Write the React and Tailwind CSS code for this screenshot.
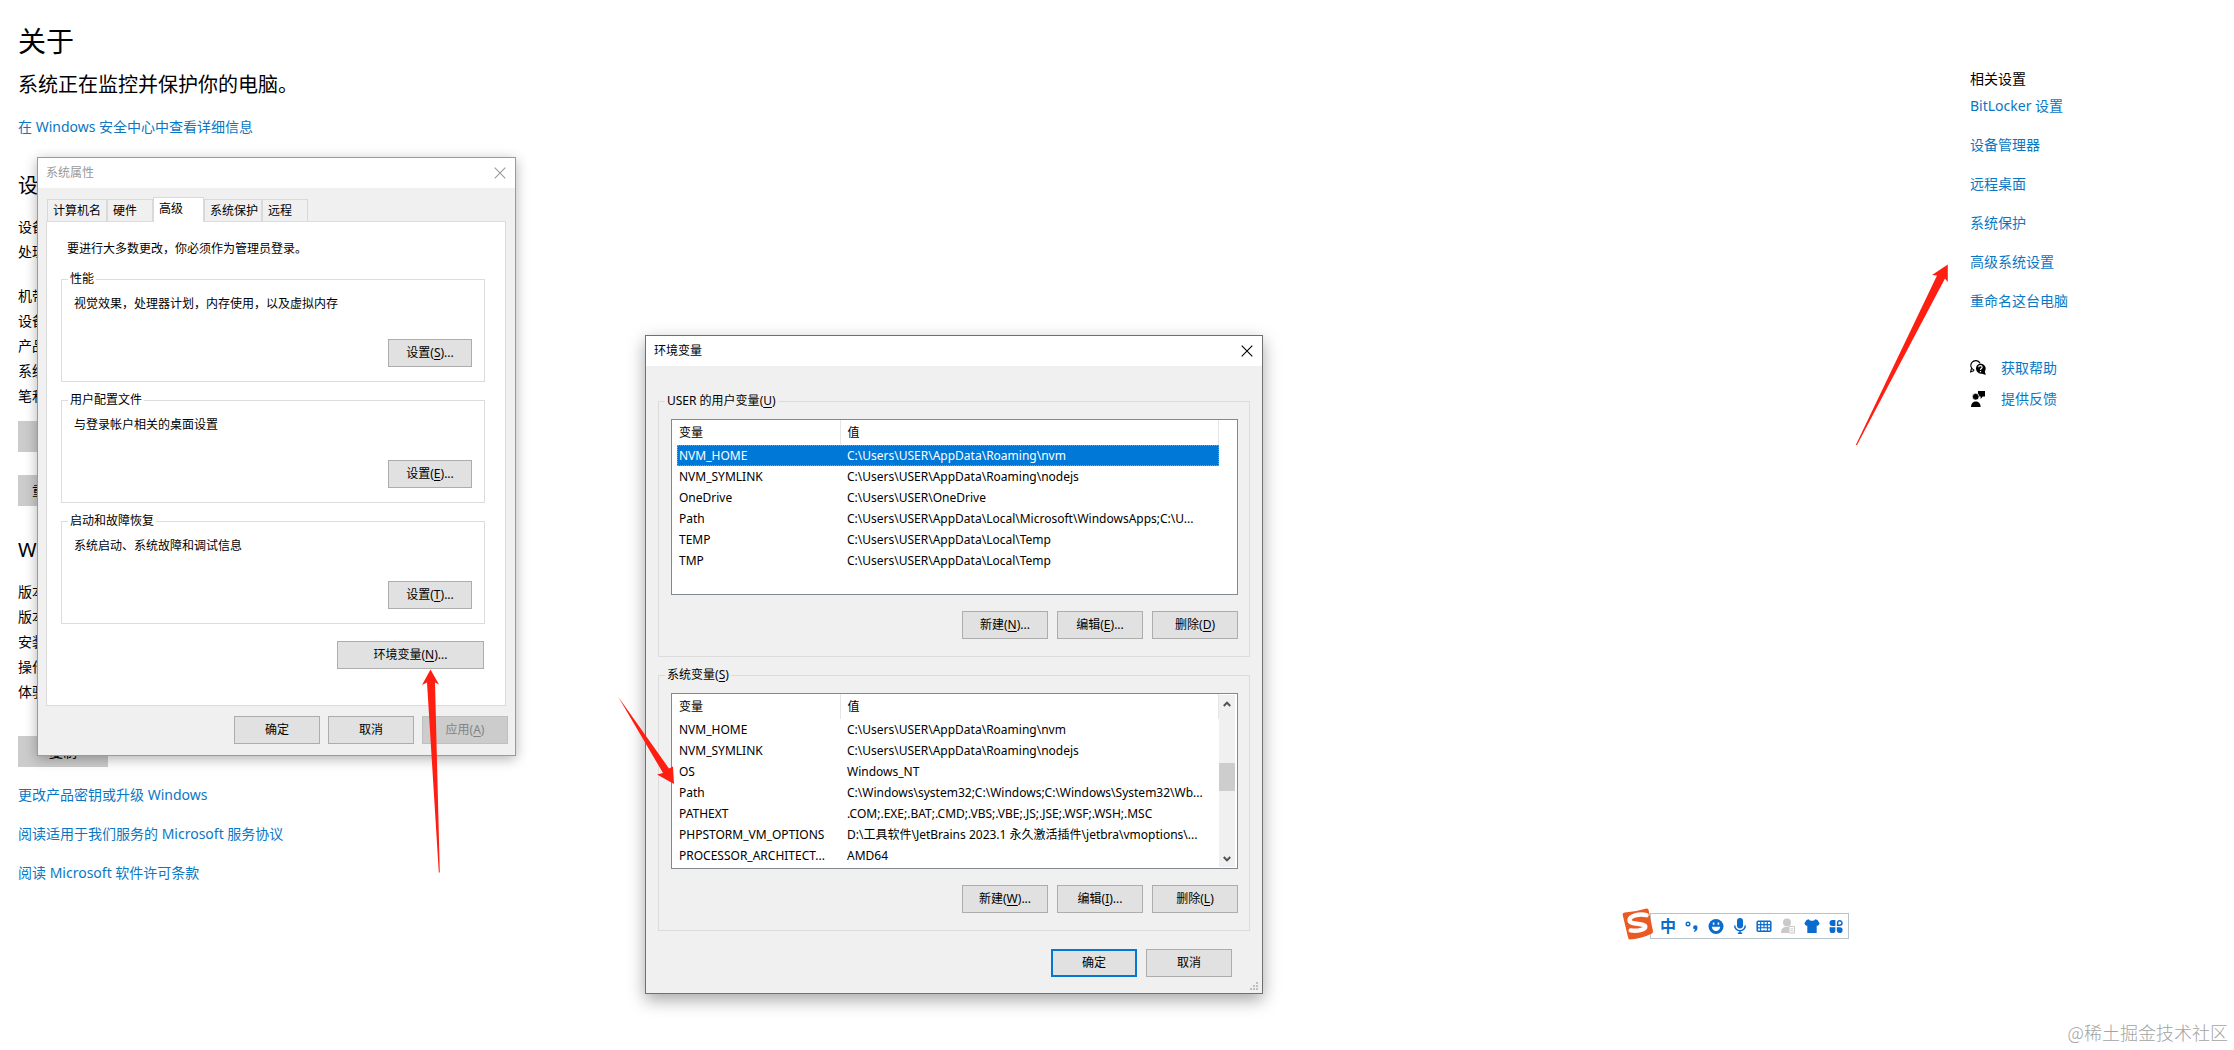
import clsx from 'clsx';

const userVars = [
  ['NVM_HOME', 'C:\\Users\\USER\\AppData\\Roaming\\nvm'],
  ['NVM_SYMLINK', 'C:\\Users\\USER\\AppData\\Roaming\\nodejs'],
  ['OneDrive', 'C:\\Users\\USER\\OneDrive'],
  ['Path', 'C:\\Users\\USER\\AppData\\Local\\Microsoft\\WindowsApps;C:\\U...'],
  ['TEMP', 'C:\\Users\\USER\\AppData\\Local\\Temp'],
  ['TMP', 'C:\\Users\\USER\\AppData\\Local\\Temp'],
];

const systemVars = [
  ['NVM_HOME', 'C:\\Users\\USER\\AppData\\Roaming\\nvm'],
  ['NVM_SYMLINK', 'C:\\Users\\USER\\AppData\\Roaming\\nodejs'],
  ['OS', 'Windows_NT'],
  ['Path', 'C:\\Windows\\system32;C:\\Windows;C:\\Windows\\System32\\Wb...'],
  ['PATHEXT', '.COM;.EXE;.BAT;.CMD;.VBS;.VBE;.JS;.JSE;.WSF;.WSH;.MSC'],
  ['PHPSTORM_VM_OPTIONS', 'D:\\工具软件\\JetBrains 2023.1 永久激活插件\\jetbra\\vmoptions\\...'],
  ['PROCESSOR_ARCHITECT...', 'AMD64'],
];

const groups = [
  { title: '性能', text: '视觉效果，处理器计划，内存使用，以及虚拟内存', hotkey: 'S' },
  { title: '用户配置文件', text: '与登录帐户相关的桌面设置', hotkey: 'E' },
  { title: '启动和故障恢复', text: '系统启动、系统故障和调试信息', hotkey: 'T' },
];

const tabs = [
  { name: '计算机名', width: 'w-[60px]' },
  { name: '硬件', width: 'w-[46px]' },
  { name: '高级', width: 'w-[51px]' },
  { name: '系统保护', width: 'w-[58px]' },
  { name: '远程', width: 'w-[46px]' },
];

const relatedLinks = ['BitLocker 设置', '设备管理器', '远程桌面', '系统保护', '高级系统设置', '重命名这台电脑'];

// Caption with its underlined access key, e.g. 设置(S)...
const Caption = ({ text, hotkey, dots }) => (
  <>
    {text}
    {hotkey && <>(<span className="underline underline-offset-2">{hotkey}</span>)</>}
    {dots && '...'}
  </>
);

const WinButton = ({ className, isDefault, ...caption }) => (
  <button
    type="button"
    className={clsx(
      'h-7 bg-[#e1e1e1] disabled:bg-[#cccccc] disabled:text-[#838383] disabled:border-[#bfbfbf]',
      isDefault ? 'border-2 border-[#0078d7]' : 'border border-[#adadad]',
      className || 'w-[86px]'
    )}
    disabled={caption.disabled}
  >
    <Caption {...caption} />
  </button>
);

const TitleBar = ({ id, title, className }) => (
  <header className={clsx('h-[30px] flex items-center justify-between bg-white pl-2 pr-[7px]', className)}>
    <h2 id={id}>{title}</h2>
    <button type="button" aria-label="关闭" className="w-4 h-4 flex items-center justify-center">
      <svg viewBox="0 0 12 12" className="w-3 h-3" fill="none" stroke="currentColor" strokeWidth="1.1">
        <path d="M.7.7l10.6 10.6M11.3.7L.7 11.3" />
      </svg>
    </button>
  </header>
);

const VarTable = ({ rows, selected, label }) => (
  <table aria-label={label} className="w-[542px] table-fixed text-left">
    <thead>
      <tr className="h-[25px]">
        <th className="w-[163px] pl-0.5 font-normal border-r border-[#e5e5e5]">变量</th>
        <th className="pl-[7px] font-normal border-r border-[#e5e5e5]">值</th>
      </tr>
    </thead>
    <tbody>
      {rows.map(([name, value], i) => (
        <tr
          key={name}
          className={clsx('h-[21px] whitespace-nowrap', i === selected && 'bg-[#0078d7] text-white outline-1 outline-dotted -outline-offset-1 outline-[#e08a35]')}
        >
          <td className="pl-0.5 overflow-hidden">{name}</td>
          <td className="pl-[7px] overflow-hidden">{value}</td>
        </tr>
      ))}
    </tbody>
  </table>
);

const VarGroup = ({ legend, hotkey, label, rows, selected, keys, scroll }) => (
  <fieldset className="h-[264px] border border-[#dcdcdc] pl-3 pr-[11px] pt-[10px]">
    <legend className="ml-[-6px] px-0.5 leading-4">
      <Caption text={legend} hotkey={hotkey} />
    </legend>
    <div className="h-44 flex border border-[#828790] bg-white pl-[5px] overflow-hidden">
      <div>
        <VarTable rows={rows} selected={selected} label={label} />
      </div>
      {scroll && (
        <div className="w-4 my-px flex flex-col items-center bg-[#f0f0f0]">
          <button type="button" aria-label="向上滚动" className="h-[17px] flex items-center">
            <svg viewBox="0 0 8 6" className="w-2 h-[6px]" fill="none" stroke="#505050" strokeWidth="2">
              <path d="M.8 5L4 1.6 7.2 5" />
            </svg>
          </button>
          <div className="w-full flex-1 pt-[51px]">
            <div className="h-7 bg-[#cdcdcd]" />
          </div>
          <button type="button" aria-label="向下滚动" className="h-[17px] flex items-center">
            <svg viewBox="0 0 8 6" className="w-2 h-[6px]" fill="none" stroke="#505050" strokeWidth="2">
              <path d="M.8 1L4 4.4 7.2 1" />
            </svg>
          </button>
        </div>
      )}
    </div>
    <div className="flex justify-end gap-[9px] mt-4">
      <WinButton text="新建" hotkey={keys[0]} dots />
      <WinButton text="编辑" hotkey={keys[1]} dots />
      <WinButton text="删除" hotkey={keys[2]} />
    </div>
  </fieldset>
);

const About = () => (
  <main className="pl-[18px] pt-[21px]">
    <h1 className="text-[28px] leading-10">关于</h1>
    <p className="mt-[10px] text-xl leading-7">系统正在监控并保护你的电脑。</p>
    <a href="#security" className="block mt-[18px] leading-5 text-[#0a77c4]">在 Windows 安全中心中查看详细信息</a>

    <h2 className="mt-[35px] text-xl leading-7">设备规格</h2>
    <ul className="mt-[14px] leading-[25px]">
      <li>设备名称</li>
      <li>处理器</li>
      <li className="mt-[19px]">机带 RAM</li>
      <li>设备 ID</li>
      <li>产品 ID</li>
      <li>系统类型</li>
      <li>笔和触控</li>
    </ul>
    <button type="button" className="block mt-[13px] h-[31px] w-[90px] bg-[#cccccc]">复制</button>
    <button type="button" className="block mt-[23px] h-[31px] px-[14px] bg-[#cccccc]">重命名这台电脑</button>

    <h2 className="mt-[30px] text-xl leading-7">Windows 规格</h2>
    <ul className="mt-[15px] leading-[25px]">
      <li>版本</li>
      <li>版本号</li>
      <li>安装日期</li>
      <li>操作系统版本</li>
      <li>体验</li>
    </ul>
    <button type="button" className="block mt-8 h-[31px] w-[90px] bg-[#cccccc]">复制</button>

    <nav className="mt-[18px] flex flex-col items-start gap-[19px] leading-5 text-[#0a77c4]">
      <a href="#upgrade">更改产品密钥或升级 Windows</a>
      <a href="#services">阅读适用于我们服务的 Microsoft 服务协议</a>
      <a href="#license">阅读 Microsoft 软件许可条款</a>
    </nav>
  </main>
);

const Related = () => (
  <aside className="w-[264px] shrink-0 pt-[69px] leading-5">
    <h2>相关设置</h2>
    <nav className="mt-[7px] flex flex-col items-start gap-[19px] text-[#0a77c4]">
      {relatedLinks.map((link) => (
        <a key={link} href="#related">{link}</a>
      ))}
    </nav>
    <nav className="mt-[47px] flex flex-col gap-[11px]">
      <div className="flex items-center gap-[15px]">
        <svg viewBox="0 0 16 16" className="w-4 h-4">
          <path d="M4.2 10.2A4.9 4.9 0 1 1 10 3.1" fill="none" stroke="#000" strokeWidth="1.1" />
          <path d="M1.6 8.2L.6 12l3.6-1.5" fill="none" stroke="#000" strokeWidth="1.1" />
          <path d="M10.3 3.4a5.2 5.2 0 0 1 4.5 8l1 3.7-3.6-1.4A5.2 5.2 0 1 1 10.3 3.4z" />
          <path d="M8.7 7.3c0-2.3 3.4-2.2 3.4-.1 0 1.4-1.6 1.3-1.6 2.7M10.5 10.9v1.3" fill="none" stroke="#fff" strokeWidth="1.2" />
        </svg>
        <a href="#help" className="text-[#0a77c4]">获取帮助</a>
      </div>
      <div className="flex items-center gap-[15px]">
        <svg viewBox="0 0 16 16" className="w-4 h-4">
          <path d="M8 0h7v5.4h-2.2L10.6 8V5.4H8z" />
          <circle cx="5.7" cy="5.7" r="3.4" stroke="#fff" strokeWidth=".8" />
          <path d="M1 16c0-7.3 9.6-7.3 9.6 0z" />
        </svg>
        <a href="#feedback" className="text-[#0a77c4]">提供反馈</a>
      </div>
    </nav>
  </aside>
);

const SystemProperties = () => (
  <section
    aria-labelledby="sys-title"
    className="absolute left-[37px] top-[157px] w-[479px] border border-[#9a9a9a] bg-[#f0f0f0] text-xs shadow-[0_3px_12px_rgba(0,0,0,0.3)]"
  >
    <TitleBar id="sys-title" title="系统属性" className="text-[#999999]" />
    <div className="px-2 pt-[9px]">
      <div role="tablist" className="flex items-end pl-px">
        {tabs.map(({ name, width }) => (
          <button
            key={name}
            type="button"
            role="tab"
            aria-selected={name === '高级'}
            className={clsx(
              'border border-[#d9d9d9] border-b-0 pl-[5px] text-left',
              width,
              name === '高级' ? 'h-[25px] -mb-px pb-[3px] bg-white relative' : 'h-[22px] bg-[#f0f0f0]'
            )}
          >
            {name}
          </button>
        ))}
      </div>
      <div role="tabpanel" className="h-[485px] w-[460px] border border-[#dcdcdc] bg-white pl-[14px] pr-5 pt-[19px]">
        <p className="pl-[6px] leading-4">要进行大多数更改，你必须作为管理员登录。</p>
        <div className="mt-[14px] flex flex-col gap-[10px]">
          {groups.map(({ title, text, hotkey }) => (
            <fieldset key={title} className="h-[111px] border border-[#dcdcdc] px-3">
              <legend className="ml-[-6px] px-0.5 leading-4">{title}</legend>
              <p className="mt-[9px] leading-4">{text}</p>
              <div className="mt-[27px] flex justify-end">
                <WinButton className="w-[84px]" text="设置" hotkey={hotkey} dots />
              </div>
            </fieldset>
          ))}
        </div>
        <div className="mt-[17px] flex justify-end pr-px">
          <WinButton className="w-[147px]" text="环境变量" hotkey="N" dots />
        </div>
      </div>
    </div>
    <div className="flex justify-end gap-2 pt-[10px] pb-[11px] pr-[7px]">
      <WinButton text="确定" />
      <WinButton text="取消" />
      <WinButton text="应用" hotkey="A" disabled />
    </div>
  </section>
);

const EnvVariables = () => (
  <section
    aria-labelledby="env-title"
    className="absolute left-[645px] top-[335px] w-[618px] border border-[#707070] bg-[#f0f0f0] text-xs shadow-[0_6px_16px_rgba(0,0,0,0.35)]"
  >
    <TitleBar id="env-title" title="环境变量" />
    <div className="px-3 pt-[27px]">
      <div className="flex flex-col gap-[10px]">
        <VarGroup legend="USER 的用户变量" hotkey="U" label="用户变量" rows={userVars} selected={0} keys={['N', 'E', 'D']} />
        <VarGroup legend="系统变量" hotkey="S" label="系统变量" rows={systemVars} keys={['W', 'I', 'L']} scroll />
      </div>
      <div className="mt-[18px] flex justify-end gap-[9px] pr-[18px] pb-4">
        <WinButton text="确定" isDefault />
        <WinButton text="取消" />
      </div>
    </div>
    <svg viewBox="0 0 9 9" className="absolute right-[3px] bottom-0.5 w-[9px] h-[9px]" fill="#bfbfbf">
      <path d="M6 0h2v2H6zM6 3h2v2H6zM6 6h2v2H6zM3 3h2v2H3zM3 6h2v2H3zM0 6h2v2H0z" />
    </svg>
  </section>
);

const Ime = () => (
  <div className="absolute left-[1622px] top-[908px] flex items-center">
    <svg viewBox="0 0 32 32" className="w-8 h-8 relative z-10">
      <path d="M3 4.5Q15 3.5 24.5.5 26 .2 26.6 2L31 23q.4 2-1.500 2.800Q20 30.500 8.500 31.500 6.700 31.600 6.200 30L.7 7Q.3 4.800 3 4.500z" fill="#ec5a24" />
      <path d="M24.500 7.200C17 5.400 7.700 7.800 7.500 12.200c-.2 4.800 15.600 2.700 15.800 6.500.2 3.300-8.500 4.700-14.600 3.700" fill="none" stroke="#fff" strokeWidth="4.400" strokeLinecap="round" />
    </svg>
    <div className="-ml-1 mt-1 h-[26px] w-[199px] border border-[#b8c4cc] bg-white flex items-center pl-[9px] gap-2 text-[#0a6cce]">
      <span className="w-4 text-center text-base leading-4 font-bold">中</span>
      <svg viewBox="0 0 16 16" className="w-4 h-4">
        <circle cx="4" cy="6" r="1.8" fill="none" stroke="currentColor" strokeWidth="1.4" />
        <path d="M11.200 7.300a2.200 2.200 0 0 1 2.300 2.400c0 2-1.200 3.600-3.200 4.300l-.6-1c.9-.5 1.400-.9 1.500-1.500a2.100 2.100 0 0 1 0-4.200z" fill="currentColor" />
      </svg>
      <svg viewBox="0 0 16 16" className="w-4 h-4">
        <circle cx="8" cy="8.500" r="7.500" fill="currentColor" />
        <path d="M3.800 8.700h8.400a4.200 4.200 0 0 1-8.400 0zM4.800 4.600h1.600v2.200H4.800zM9.600 4.600h1.600v2.200H9.600z" fill="#fff" />
      </svg>
      <svg viewBox="0 0 16 16" className="w-4 h-4">
        <rect x="5" y="0" width="6" height="10.500" rx="3" fill="currentColor" />
        <path d="M2.700 7.500a5.300 5.300 0 0 0 10.600 0M8 12.800V16M5.800 15.300h4.400" fill="none" stroke="currentColor" strokeWidth="1.500" />
      </svg>
      <svg viewBox="0 0 16 16" className="w-4 h-4">
        <rect x="1.200" y="3.200" width="13.600" height="10.100" rx="1" fill="none" stroke="currentColor" strokeWidth="1.500" />
        <path d="M4.700 3v7M8 3v10M11.300 3v7M1 6.700h14M1 9.900h14M4.700 10v3M11.300 10v3" fill="none" stroke="currentColor" strokeWidth="1.200" />
        <path d="M5.300 10.500h5.400v1.500H5.300z" fill="#fff" />
      </svg>
      <svg viewBox="0 0 16 16" className="w-4 h-4">
        <circle cx="7" cy="4.500" r="4" fill="#c9c9c9" />
        <path d="M1 15c0-4.500 2.500-6 5-6h3v6H1z" fill="#c9c9c9" />
        <path d="M9 8.500h5.500v6.500H9z" fill="#fff" stroke="#c9c9c9" />
        <path d="M10.300 10.800h3M10.300 12.800h3" stroke="#c9c9c9" />
      </svg>
      <svg viewBox="0 0 16 16" className="w-4 h-4">
        <path d="M4.800 1.200C6 3.200 10 3.200 11.200 1.200L13.500 2l2.200 3.500-2 2.500-1-.4V15H3.300V7.600l-1 .4-2-2.500L2.500 2z" fill="currentColor" />
      </svg>
      <svg viewBox="0 0 16 16" className="w-4 h-4">
        <path d="M4.500 2h2.900v6H4.500a3 3 0 0 1 0-6zM1.600 9.200h5.800v3a2.900 2.900 0 1 1-5.800 0zM8.800 9.200h3a2.900 2.900 0 1 1-3 2.900z" fill="currentColor" />
        <path d="M9.600 7.200V5a2.200 2.200 0 1 1 2.200 2.200z" fill="none" stroke="currentColor" strokeWidth="1.500" />
      </svg>
    </div>
  </div>
);

// Hand-placed pointers over the windows
const Arrows = () => (
  <svg viewBox="0 0 2234 1050" className="absolute left-0 top-0 w-[2234px] h-[1050px] pointer-events-none" fill="#ff1f12">
    <path d="M430.500 669.500L439 684.500 435 682.500 439.800 872.500H438.800L427 682.500 422 685z" />
    <path d="M618 696.500L669 768.500 673 766.500 674 784 657 774.500 663 773z" />
    <path d="M1947.800 264.500V282L1945 278.500 1857 445H1855.800L1937 275.500 1932 275z" />
  </svg>
);

const App = () => {
  return (
    <div className="relative min-h-screen overflow-hidden bg-white text-black text-sm font-['Noto_Sans','Noto_Sans_CJK_SC',sans-serif]">
      <div className="flex justify-between">
        <About />
        <Related />
      </div>
      <SystemProperties />
      <EnvVariables />
      <Ime />
      <Arrows />
      <p className="absolute right-[6px] bottom-[6px] text-lg leading-6 text-[#a3a3a3] font-['Noto_Sans_CJK_SC',sans-serif] font-light">@稀土掘金技术社区</p>
    </div>
  );
};

export default App;
